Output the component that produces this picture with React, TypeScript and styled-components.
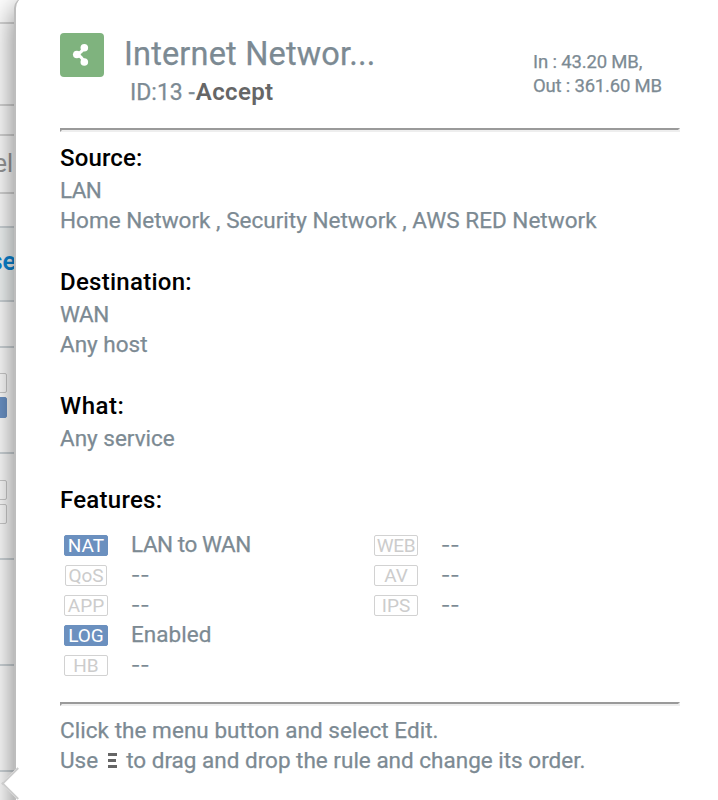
import React from "react";
import styled, { createGlobalStyle } from "styled-components";

const GlobalStyle = createGlobalStyle`
  * { box-sizing: border-box; }
  body { margin: 0; background: #fff; font-family: Roboto, "Liberation Sans", sans-serif; }
`;

const Page = styled.div`
  display: flex;
  width: 718px;
  height: 800px;
  overflow: hidden;
`;

const RuleList = styled.div`
  flex: none;
  width: 14px;
  height: 800px;
  overflow: hidden;
  background: #fff;
`;

const ListRow = styled.div<{ $height: number; $line?: string; $fill?: string; $shift?: number }>`
  display: flex;
  flex-direction: column;
  align-items: flex-end;
  justify-content: center;
  gap: 4px;
  height: ${(p) => p.$height}px;
  padding-bottom: ${(p) => p.$shift ?? 0}px;
  border-bottom: 2px solid ${(p) => p.$line ?? "#cfd6da"};
  background: ${(p) => p.$fill ?? "transparent"};
`;

const ListText = styled.span<{ $link?: boolean }>`
  margin-right: ${(p) => (p.$link ? -2 : 1)}px;
  font-size: 25px;
  line-height: 28px;
  white-space: nowrap;
  font-weight: ${(p) => (p.$link ? 600 : 400)};
  color: ${(p) => (p.$link ? "#0a86d6" : "#999")};
`;

const ListTag = styled.div<{ $on?: boolean }>`
  flex: none;
  width: 44px;
  height: ${(p) => (p.$on ? 21 : 20)}px;
  margin-right: 7px;
  border: 1px solid ${(p) => (p.$on ? "#6b93c7" : "#ccc")};
  border-radius: 2px;
  background: ${(p) => (p.$on ? "#6b93c7" : "transparent")};
`;

const Panel = styled.main`
  position: relative;
  flex: none;
  width: 760px;
  height: 860px;
  border-left: 2px solid #bdbdbd;
  border-top-left-radius: 10px;
  margin-top: -2px;
  padding: 35px 0 0 44px;
  background: #fff;
  box-shadow: 0 10px 30px rgba(0, 0, 0, 0.54);
`;

const Pointer = styled.div`
  position: absolute;
  left: -10px;
  top: 774px;
  width: 23px;
  height: 23px;
  border: solid #ccc;
  border-width: 0 0 2px 2px;
  background: #fff;
  transform: rotate(45deg);
`;

const Content = styled.div`
  width: 620px;
  -webkit-text-stroke-width: 0.25px;
`;

const Header = styled.header`
  display: flex;
  height: 95px;
`;

const IconTile = styled.div`
  flex: none;
  width: 44px;
  height: 44px;
  border-radius: 4px;
  background: #7fb37e;
`;

const Heading = styled.div`
  flex: none;
  width: 429px;
  padding-left: 20px;
`;

const Title = styled.h1`
  margin: 1px 0 0;
  font-size: 32.5px;
  line-height: 40px;
  font-weight: 400;
  color: #7c8a93;
`;

const RuleId = styled.div`
  padding-left: 6px;
  margin-top: 3px;
  font-size: 23px;
  line-height: 30px;
  color: #7c8a93;
`;

const Action = styled.span<{ $track: number }>`
  margin-left: 1px;
  font-size: 24px;
  font-weight: 600;
  color: #666;
  -webkit-text-stroke-width: 0;
  letter-spacing: ${(p) => p.$track}px;
`;

const Traffic = styled.div`
  padding-top: 17px;
  font-size: 18.5px;
  line-height: 24px;
  white-space: nowrap;
  color: #7c8a93;
`;

const Divider = styled.hr`
  margin: 0;
  height: 4px;
  border: 2px solid;
  border-color: #9a9a9a #eee #eee #9a9a9a;
`;

const Sections = styled.div`
  padding-top: 10px;
`;

const Section = styled.section`
  padding-bottom: 32px;
`;

const SectionTitle = styled.h2<{ $track: number }>`
  margin: 0;
  font-size: 24px;
  line-height: 32px;
  font-weight: 500;
  color: #000;
  -webkit-text-stroke-width: 0;
  letter-spacing: ${(p) => p.$track}px;
`;

const Line = styled.div<{ $track: number }>`
  padding-top: 1px;
  height: 30px;
  font-size: 22.5px;
  line-height: 30px;
  white-space: pre;
  color: #7c8a93;
  letter-spacing: ${(p) => p.$track}px;
`;

const Value = styled(Line)`
  padding-top: 0;
`;

const Unset = styled(Line)`
  font-family: Inter, sans-serif;
  font-size: 20px;
`;

const Text = styled.span<{ $track: number }>`
  letter-spacing: ${(p) => p.$track}px;
`;

const Features = styled.div`
  display: grid;
  grid-template-columns: 310px 310px;
  grid-template-rows: repeat(5, 30px);
  grid-auto-flow: column;
  padding: 13px 0 23px;
`;

const Feature = styled.div<{ $col: number }>`
  grid-column: ${(p) => p.$col};
  display: flex;
  align-items: center;
  padding-left: 4px;
`;

const Tag = styled.div<{ $on?: boolean; $small?: boolean; $track: number }>`
  width: ${(p) => (p.$small ? 42 : 44)}px;
  height: 21px;
  margin: 3px ${(p) => (p.$small ? 24 : 23)}px 0 ${(p) => (p.$small ? 1 : 0)}px;
  border: 1px solid ${(p) => (p.$on ? "#6b90bf" : "#d2d2d2")};
  border-radius: 2px;
  background: ${(p) => (p.$on ? "#6b90bf" : "#fff")};
  color: ${(p) => (p.$on ? "#fff" : "#ccc")};
  font-size: 19px;
  line-height: 20px;
  text-align: center;
  white-space: nowrap;
  -webkit-text-stroke-width: 0;
  letter-spacing: ${(p) => p.$track}px;
`;

const Footer = styled.footer`
  padding-top: 8px;
`;

const Grip = styled.span`
  display: inline-block;
  width: 10px;
  height: 15px;
  margin: 0 9px;
  vertical-align: 0;
`;

const GripIcon = styled.svg`
  display: block;
`;

const features = [
  { tag: "NAT", value: "LAN to WAN", on: true, col: 1, tagTrack: 0, track: -0.45 },
  { tag: "QoS", value: "", col: 1, small: true, tagTrack: 0, track: 0 },
  { tag: "APP", value: "", col: 1, tagTrack: 0, track: 0 },
  { tag: "LOG", value: "Enabled", on: true, col: 1, tagTrack: 0, track: 0.05 },
  { tag: "HB", value: "", col: 1, tagTrack: 0, track: 0 },
  { tag: "WEB", value: "", col: 2, tagTrack: -0.4, track: 0 },
  { tag: "AV", value: "", col: 2, tagTrack: 0, track: 0 },
  { tag: "IPS", value: "", col: 2, tagTrack: 0, track: 0 },
];

export default function App() {
  return (
    <>
      <GlobalStyle />
      <Page>
        <RuleList>
          <ListRow $height={24} $line="#d6d6d6" />
          <ListRow $height={82} $line="#d6d6d6" />
          <ListRow $height={30} $line="#d6d6d6" />
          <ListRow $height={58} $line="#d6d6d6"><ListText>el</ListText></ListRow>
          <ListRow $height={34} />
          <ListRow $height={74} $fill="#f3f7f7" $shift={4}><ListText $link>se</ListText></ListRow>
          <ListRow $height={46} />
          <ListRow $height={106} $shift={9}><ListTag /><ListTag $on /></ListRow>
          <ListRow $height={106} $shift={9}><ListTag /><ListTag /></ListRow>
          <ListRow $height={106} />
          <ListRow $height={106} />
          <ListRow $height={106} />
        </RuleList>
        <Panel>
          <Pointer />
          <Content>
            <Header>
              <IconTile>
                <svg width="44" height="44" viewBox="0 0 44 44" fill="#fff">
                  <path d="M24 14.7Q22 19.5 16.7 21.5Q22 23.5 24 29" fill="none" stroke="#fff" strokeWidth="3" />
                  <circle cx="24.3" cy="14.7" r="3.8" />
                  <circle cx="16.8" cy="21.5" r="3.8" />
                  <circle cx="24.3" cy="29" r="3.8" />
                </svg>
              </IconTile>
              <Heading>
                <Title><Text $track={0.18}>Internet Networ...</Text></Title>
                <RuleId><Text $track={0}>ID:13 -</Text><Action $track={0.35}>Accept</Action></RuleId>
              </Heading>
              <Traffic>
                <div><Text $track={-0.15}>In : 43.20 MB,</Text></div>
                <div><Text $track={-0.2}>Out : 361.60 MB</Text></div>
              </Traffic>
            </Header>
            <Divider />
            <Sections>
              <Section>
                <SectionTitle $track={0.15}>Source:</SectionTitle>
                <Line $track={-0.6}>LAN</Line>
                <Line $track={0.02}>Home Network , Security Network , AWS RED Network</Line>
              </Section>
              <Section>
                <SectionTitle $track={0.27}>Destination:</SectionTitle>
                <Line $track={-0.4}>WAN</Line>
                <Line $track={0}>Any host</Line>
              </Section>
              <Section>
                <SectionTitle $track={0.5}>What:</SectionTitle>
                <Line $track={0}>Any service</Line>
              </Section>
              <SectionTitle $track={0.27}>Features:</SectionTitle>
            </Sections>
            <Features>
              {features.map((f) => (
                <Feature key={f.tag} $col={f.col}>
                  <Tag $on={f.on} $small={f.small} $track={f.tagTrack}>{f.tag}</Tag>
                  {f.value ? <Value $track={f.track}>{f.value}</Value> : <Unset $track={0}>--</Unset>}
                </Feature>
              ))}
            </Features>
            <Divider />
            <Footer>
              <Line $track={0.05}>Click the menu button and select Edit.</Line>
              <Line $track={0}>
                Use
                <Grip>
                  <GripIcon width="10" height="15" fill="#666">
                    <path d="M1 0h9v3h-9zM1 6h8v3h-8zM1 12h9v3h-9z" />
                  </GripIcon>
                </Grip>
                to drag and drop the rule and change its order.
              </Line>
            </Footer>
          </Content>
        </Panel>
      </Page>
    </>
  );
}
